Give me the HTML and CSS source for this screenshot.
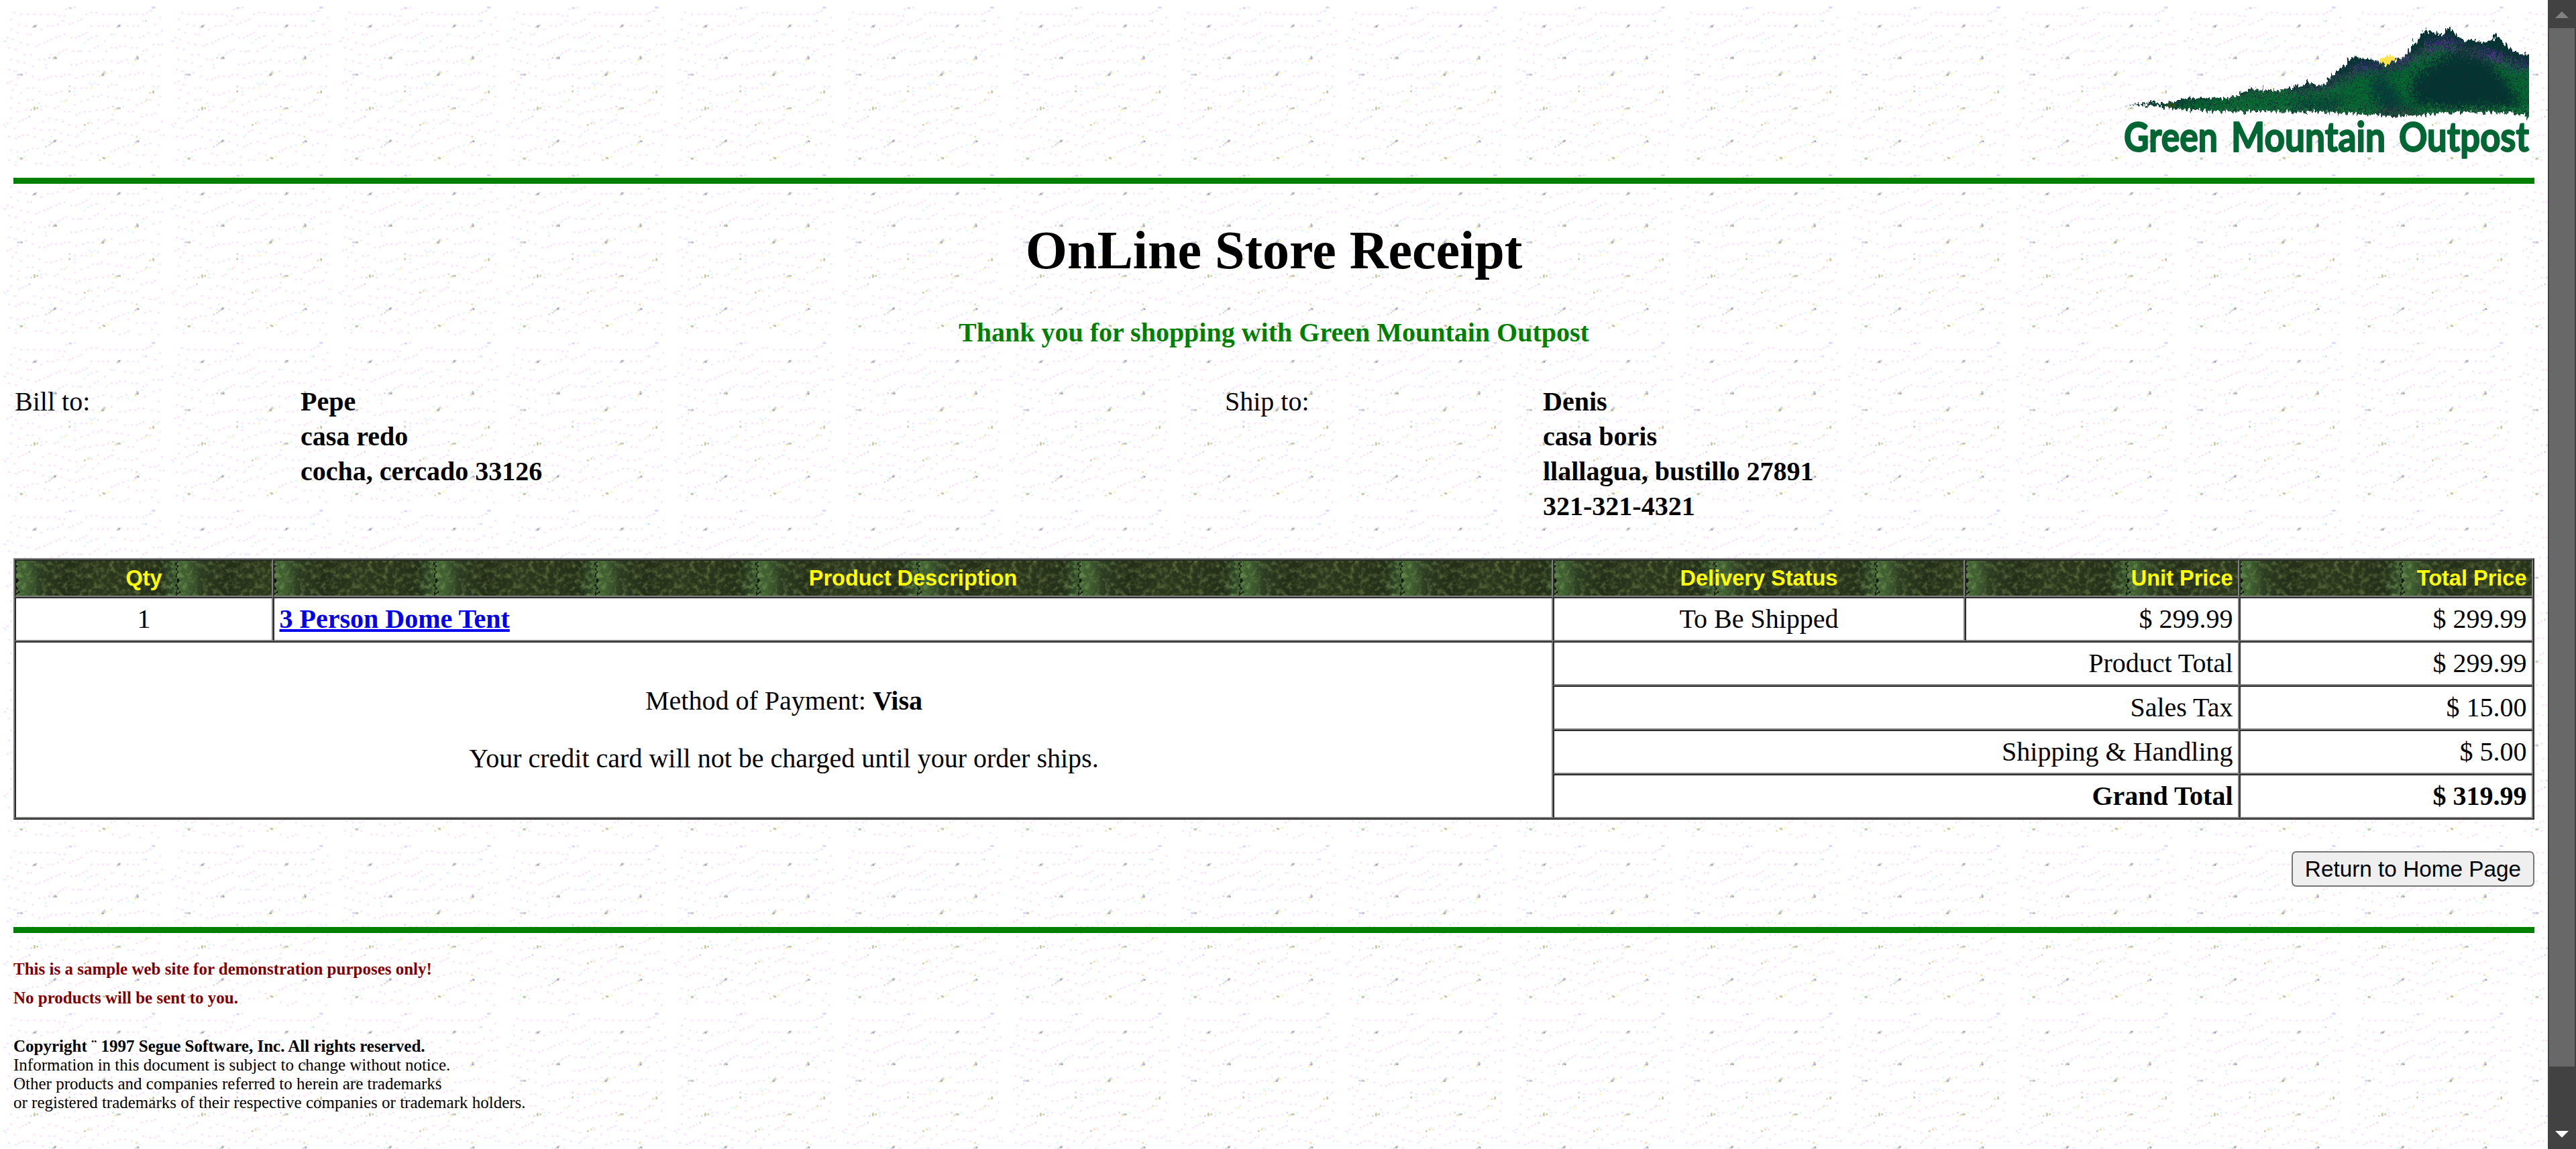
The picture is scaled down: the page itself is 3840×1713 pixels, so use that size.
FILE: index.html
```html
<!DOCTYPE html>
<html lang="en">
<head>
<meta charset="utf-8">
<title>OnLine Store Receipt</title>
<link rel="stylesheet" href="styles.css">
</head>
<body>
<main class="page">
  <header class="banner">
    <svg class="logo" width="610" height="215" viewBox="-2 0 610 215" role="img" aria-label="Green Mountain Outpost">
      <defs>
        <filter id="edge" filterUnits="userSpaceOnUse" x="-10" y="-10" width="640" height="170" color-interpolation-filters="sRGB">
          <feTurbulence type="fractalNoise" baseFrequency="0.3 0.12" numOctaves="2" seed="4" result="n"/>
          <feDisplacementMap in="SourceGraphic" in2="n" scale="15" xChannelSelector="R" yChannelSelector="G"/>
        </filter>
        <filter id="dither" filterUnits="userSpaceOnUse" x="0" y="0" width="1500" height="520" color-interpolation-filters="sRGB">
          <feGaussianBlur in="SourceGraphic" stdDeviation="9" result="b"/>
          <feTurbulence type="fractalNoise" baseFrequency="0.2" numOctaves="2" seed="9" result="n"/>
          <feDisplacementMap in="b" in2="n" scale="150" xChannelSelector="R" yChannelSelector="G" result="d"/>
          <feColorMatrix in="n" values="0 0 0 0 0.06 0 0 0 0 0.19 0 0 0 0 0.19 7 0 0 0 -3.7" result="specks"/>
          <feMerge><feMergeNode in="d"/><feMergeNode in="specks"/></feMerge>
        </filter>
        <clipPath id="frame"><rect x="0" y="0" width="605" height="142"/></clipPath>
        <clipPath id="ridge">
          <path d="M68 408L135 405L150 396L165 402L225 396L250 382L300 380L365 377L400 380L440 365L470 340L500 338L530 343L600 340L640 328L670 308L700 323L730 320L750 280L790 240L812 203L835 196L890 208L915 217L930 238L965 210L1000 192L1015 155L1035 125L1050 92L1070 76L1100 88L1125 98L1143 60L1163 90L1190 121L1230 126L1285 130L1302 90L1322 130L1350 162L1390 184L1440 184L1440 490L1411 474L1390 452L1350 442L1150 445L1020 456L960 463L900 452L700 440L500 438L350 436L280 430L210 422L140 412Z"/>
        </clipPath>
      </defs>
      <g clip-path="url(#frame)">
        <g filter="url(#edge)">
          <g transform="translate(-25 -20) scale(.4464 .3333)">
            <ellipse cx="938" cy="218" rx="30" ry="26" fill="#ffe24a"/>
            <g clip-path="url(#ridge)">
              <rect x="60" y="50" width="1400" height="440" fill="#033431"/>
              <g filter="url(#dither)">
                <rect x="20" y="20" width="1460" height="480" fill="#033431"/>
                <path d="M200 450L240 395L470 350L600 350L720 345L800 300L860 260L900 270L960 260L1030 200L1100 160L1170 165L1080 220L1020 290L1010 400L1130 425L1380 415L1330 300L1250 200L1480 260L1480 490L60 490Z" fill="#026a30"/>
                <path d="M880 290L930 280L950 340L1000 400L940 440L880 390Z" fill="#05403a"/>
                <path d="M620 400L790 385L760 430L620 430Z" fill="#05403a"/>
                <path d="M600 345L720 338L790 285L850 245L930 250L1020 200L1090 150L1180 160L1250 185L1310 210L1411 245" fill="none" stroke="#4b4d66" stroke-width="20"/>
                <path d="M350 445L700 445L900 460L1000 465L1150 450L1411 455" fill="none" stroke="#4d7a53" stroke-width="16"/>
                <path d="M900 442L1040 448" stroke="#352b43" stroke-width="24"/>
                <path d="M450 350L600 343M400 375L450 365" stroke="#3d7545" stroke-width="18"/>
                <path d="M820 240L915 240M965 212L1005 200M1060 140L1170 125M1240 170L1330 200M1350 235L1411 232" fill="none" stroke="#53279a" stroke-width="22"/>
              </g>
              <path d="M60 408L250 405" stroke="#12463f" stroke-width="12"/>
              <path d="M195 410L232 408" stroke="#2e4d17" stroke-width="12"/>
            </g>
          </g>
        </g>
      </g>
      <g class="wordmark">
        <text x="1" y="186" textLength="140" lengthAdjust="spacingAndGlyphs">Green</text>
        <text x="161" y="186" textLength="230" lengthAdjust="spacingAndGlyphs">Mountain</text>
        <text x="411" y="186" textLength="194" lengthAdjust="spacingAndGlyphs">Outpost</text>
      </g>
    </svg>
  </header>

  <hr class="rule">
  <h1 class="title">OnLine Store Receipt</h1>
  <p class="thanks">Thank you for shopping with Green Mountain Outpost</p>

  <section class="parties">
    <div>Bill to:</div>
    <address>Pepe<br>casa redo<br>cocha, cercado 33126</address>
    <div>Ship to:</div>
    <address>Denis<br>casa boris<br>llallagua, bustillo 27891<br>321-321-4321</address>
  </section>

  <table class="receipt">
    <colgroup><col class="c-qty"><col class="c-product"><col class="c-status"><col class="c-unit"><col class="c-total"></colgroup>
    <tr>
      <th>Qty</th><th>Product Description</th><th>Delivery Status</th><th class="num">Unit Price</th><th class="num">Total Price</th>
    </tr>
    <tr>
      <td class="mid">1</td><td><a href="#">3 Person Dome Tent</a></td><td class="mid">To Be Shipped</td><td class="num">$ 299.99</td><td class="num">$ 299.99</td>
    </tr>
    <tr>
      <td class="payment" colspan="2" rowspan="4"><p>Method of Payment: <b>Visa</b></p><p>Your credit card will not be charged until your order ships.</p></td>
      <td class="num" colspan="2">Product Total</td><td class="num">$ 299.99</td>
    </tr>
    <tr><td class="num" colspan="2">Sales Tax</td><td class="num">$ 15.00</td></tr>
    <tr><td class="num" colspan="2">Shipping &amp; Handling</td><td class="num">$ 5.00</td></tr>
    <tr><td class="num" colspan="2"><b>Grand Total</b></td><td class="num"><b>$ 319.99</b></td></tr>
  </table>

  <div class="actions"><button class="home" type="button">Return to Home Page</button></div>

  <hr class="rule">
  <footer>
    <p class="notice">This is a sample web site for demonstration purposes only!<br>No products will be sent to you.</p>
    <p class="legal"><b>Copyright ¨ 1997 Segue Software, Inc. All rights reserved.</b><br>Information in this document is subject to change without notice.<br>Other products and companies referred to herein are trademarks<br>or registered trademarks of their respective companies or trademark holders.</p>
  </footer>
</main>
<aside class="scrollbar" aria-hidden="true">
  <svg width="20" height="10" viewBox="0 0 20 10"><path d="M0 10L10 0L20 10Z" fill="#818181"/></svg>
  <div class="thumb"></div>
  <svg width="20" height="10" viewBox="0 0 20 10"><path d="M0 0H20L10 10Z" fill="#fff"/></svg>
</aside>
</body>
</html>
```
FILE: styles.css
```css
* { box-sizing: border-box; }

body {
  margin: 0;
  display: flex;
  height: 1713px;
  overflow: hidden;
  font: 40px/46px "Liberation Serif", "Times New Roman", serif;
  color: #000;
  background: #fff url("data:image/svg+xml,%3Csvg xmlns='http://www.w3.org/2000/svg' width='250' height='250' viewBox='0 0 750 750'%3E%3Cg fill='none' stroke-linecap='round' stroke-width='9'%3E%3Cpath stroke='%23fde0fd' d='M64 56h0M94 64h0M124 64h0M154 64h0M184 64h0M214 64h0M244 64h0M266 71h0M289 71h0M296 41h0M334 34h0M386 64h0M409 56h0M431 56h0M461 64h0M491 64h0M521 64h0M551 64h0M581 64h0M611 64h0M641 64h0M656 56h0M671 49h0M716 79h0M49 86h0M86 109h0M116 116h0M184 131h0M214 116h0M236 116h0M259 109h0M281 94h0M311 109h0M326 101h0M349 94h0M364 86h0M409 116h0M439 116h0M461 116h0M484 116h0M571 116h0M596 116h0M619 116h0M694 109h0M724 139h0M49 131h0M79 146h0M124 154h0M139 154h0M34 169h0M56 176h0M19 184h0M94 191h0M124 199h0M161 206h0M176 199h0M199 191h0M214 184h0M229 176h0M251 169h0M266 161h0M289 154h0M319 169h0M341 169h0M356 161h0M371 154h0M386 146h0M409 169h0M431 161h0M469 184h0M499 154h0M559 161h0M589 169h0M626 169h0M641 161h0M664 146h0M701 154h0M686 199h0M709 199h0M724 199h0M41 214h0M71 221h0M109 244h0M139 244h0M229 244h0M266 236h0M281 229h0M296 221h0M326 229h0M349 229h0M364 229h0M401 229h0M424 214h0M439 206h0M476 229h0M499 214h0M521 214h0M536 206h0M559 206h0M589 214h0M611 214h0M641 229h0M656 221h0M716 244h0M686 251h0M49 266h0M79 274h0M109 281h0M146 296h0M176 266h0M199 266h0M206 304h0M319 289h0M341 289h0M364 281h0M386 274h0M416 281h0M439 274h0M461 266h0M499 274h0M529 281h0M544 274h0M566 266h0M649 274h0M709 296h0M41 311h0M64 319h0M116 326h0M79 349h0M146 341h0M176 356h0M199 356h0M214 349h0M229 341h0M251 341h0M274 341h0M289 334h0M311 334h0M341 349h0M371 341h0M394 334h0M416 334h0M499 319h0M536 341h0M559 341h0M581 334h0M604 334h0M619 326h0M641 326h0M679 334h0M709 341h0M34 371h0M49 364h0M71 379h0M56 401h0M94 416h0M124 394h0M146 394h0M176 409h0M206 424h0M229 424h0M251 416h0M274 409h0M334 424h0M334 394h0M364 394h0M386 394h0M409 379h0M439 379h0M484 386h0M499 379h0M521 379h0M559 401h0M589 401h0M611 401h0M626 394h0M641 386h0M686 386h0M709 386h0M49 439h0M86 461h0M124 446h0M146 446h0M176 461h0M49 484h0M79 499h0M116 491h0M184 491h0M206 476h0M244 484h0M259 476h0M296 446h0M334 469h0M364 454h0M394 446h0M416 431h0M439 431h0M454 424h0M484 431h0M521 439h0M544 439h0M574 446h0M611 469h0M634 461h0M671 446h0M716 431h0M709 469h0M289 499h0M311 499h0M341 514h0M356 506h0M379 499h0M401 499h0M431 491h0M461 491h0M484 484h0M506 514h0M574 499h0M596 499h0M634 521h0M656 514h0M679 514h0M694 506h0M49 529h0M86 544h0M101 536h0M116 529h0M191 544h0M221 529h0M251 536h0M281 544h0M311 559h0M341 566h0M409 551h0M439 536h0M469 551h0M484 544h0M499 536h0M529 551h0M559 559h0M589 559h0M611 551h0M724 544h0M19 559h0M34 551h0M64 574h0M154 574h0M184 581h0M221 581h0M244 581h0M274 596h0M304 604h0M341 611h0M364 589h0M379 581h0M416 596h0M439 574h0M641 581h0M671 589h0M694 589h0M709 581h0M731 604h0M41 611h0M71 619h0M86 611h0M101 604h0M124 604h0M154 611h0M191 626h0M274 634h0M311 649h0M341 656h0M356 649h0M371 641h0M401 634h0M431 641h0M461 619h0M484 611h0M514 604h0M536 596h0M559 596h0M589 604h0M649 649h0M671 641h0M709 649h0M49 671h0M79 679h0M109 679h0M124 671h0M146 664h0M169 664h0M199 686h0M221 694h0M266 686h0M289 679h0M326 701h0M409 686h0M439 694h0M499 679h0M514 671h0M529 664h0M551 656h0M574 679h0M611 694h0M641 694h0M694 694h0M41 716h0M71 739h0M116 716h0M161 731h0M184 731h0M214 739h0M251 724h0M281 739h0M296 731h0M326 739h0M364 716h0M386 716h0M506 731h0M536 746h0M559 739h0M574 731h0M626 746h0M679 724h0M709 746h0'/%3E%3Cpath stroke='%23d8fafa' d='M26 184h0M394 176h0M379 191h0M641 94h0M509 154h0M356 229h0M259 244h0M206 289h0M574 281h0M596 289h0M634 244h0M401 371h0M424 371h0M439 319h0M71 319h0M334 409h0M184 476h0M274 454h0M551 476h0M506 536h0M401 544h0M26 566h0M349 604h0M229 611h0M221 634h0M626 619h0M574 649h0M716 604h0M79 701h0M109 701h0M71 724h0M701 394h0M679 49h0'/%3E%3Cpath stroke='%23dcd6fb' d='M311 36h6M682 34h9M652 94h0M147 121l16 -8M524 121l14 -8M239 262l10 -8M79 334h20M221 259h0M454 336l14 -14M606 265l12 -8M311 386h0M311 409h0M131 521h0M139 491h0M506 476h0M520 486h6M656 446h0M206 656h0M221 649h0M236 636l14 -8M605 638l12 -8M94 712h0M464 708h0M686 410h0'/%3E%3Cpath stroke='%23f9f9a8' d='M409 394h0M446 341h0M476 326h0M604 271h0M289 454h0M514 491h0M649 454h0M596 648h0M484 701h0'/%3E%3Cpath stroke='%23f7d8a8' d='M671 415h0M394 551h0M229 641h0M611 611h0M446 716h0'/%3E%3Cg stroke-width='9'%3E%3Cpath stroke='%23c9cba8' d='M154 117h3M530 117h3M242 259h8M95 334h3M461 333l4 -3M614 259v-6M311 408h0M686 408v6M154 481v8M167 484h0M529 484h7M379 559h0M246 628v3M92 709h7M462 706l6 2M616 631h0'/%3E%3Cpath stroke='%23aaa2b2' stroke-width='8' d='M250 261h0M156 119h0M532 114h0M616 262h0M460 336h0M245 632h0M619 633h0'/%3E%3C/g%3E%3C/g%3E%3C/svg%3E") 0 0 / 250px 250px;
}

p, h1, hr, address { margin: 0; }

.page { width: 3798px; padding: 20px 20px 0; }

.banner {
  display: flex;
  justify-content: flex-end;
  align-items: flex-start;
  height: 245px;
  padding: 20px 5px 0 0;
}
.logo { display: block; }
.wordmark {
  font: 700 62px "Lato", "Open Sans", sans-serif;
  fill: #006633;
  stroke: #006633;
  stroke-width: 2;
  stroke-linejoin: round;
}

.rule { height: 9px; border: 0; background: #008000; }

.title {
  margin-top: 53px;
  font-size: 80px;
  line-height: 92px;
  text-align: center;
}
.thanks {
  margin-top: 54px;
  font-weight: bold;
  text-align: center;
  color: #008000;
}

.parties {
  display: grid;
  grid-template-columns: 426px 1378px 474px 1fr;
  margin-top: 54px;
  padding-left: 2px;
  line-height: 52px;
}
.parties address { font-style: normal; font-weight: bold; }

.receipt {
  width: 3758px;
  margin-top: 51px;
  table-layout: fixed;
  border: 2px solid;
  border-color: #808080 #2c2c2c #2c2c2c #808080;
  border-spacing: 0;
}
.c-qty { width: 385px; }
.c-product { width: 1908px; }
.c-status { width: 614px; }
.c-unit { width: 409px; }
.c-total { width: 438px; }

.receipt th,
.receipt td {
  height: 66px;
  padding: 0 7.5px;
  border: 2px solid;
  border-color: #2c2c2c #808080 #808080 #2c2c2c;
  background-color: #fff;
}
.receipt th {
  height: 56px;
  font: bold 32.5px/37px "Liberation Sans", Arial, sans-serif;
  color: #ff0;
  background: #2b371c url("data:image/svg+xml,%3Csvg xmlns='http://www.w3.org/2000/svg' width='240' height='240'%3E%3Cdefs%3E%3ClinearGradient id='g'%3E%3Cstop offset='0' stop-color='%23406032'/%3E%3Cstop offset='.05' stop-color='%23406032'/%3E%3Cstop offset='.14' stop-color='%232a3b20'/%3E%3Cstop offset='.3' stop-color='%23222e17'/%3E%3Cstop offset='.5' stop-color='%232b381d'/%3E%3Cstop offset='.75' stop-color='%2328341a'/%3E%3Cstop offset='.88' stop-color='%23222e17'/%3E%3Cstop offset='.95' stop-color='%232e4425'/%3E%3Cstop offset='1' stop-color='%23406032'/%3E%3C/linearGradient%3E%3Cfilter id='n' x='0' y='0' width='1' height='1' color-interpolation-filters='sRGB'%3E%3CfeTurbulence type='fractalNoise' baseFrequency='.13' numOctaves='3' seed='8' stitchTiles='stitch' result='t'/%3E%3CfeDisplacementMap in='SourceGraphic' in2='t' scale='22' xChannelSelector='R' yChannelSelector='G' result='d'/%3E%3CfeColorMatrix in='t' values='.5 .2 0 0 -.31 .55 .25 0 0 -.36 .35 .1 0 0 -.2 0 0 0 0 1' result='c'/%3E%3CfeComposite in='d' in2='c' operator='arithmetic' k2='1' k3='.8'/%3E%3C/filter%3E%3C/defs%3E%3Crect x='-30' width='300' height='240' fill='%23406032'/%3E%3Crect width='240' height='240' fill='url(%23g)' filter='url(%23n)'/%3E%3C/svg%3E") 0 -12px / 240px 240px;
}
.receipt .mid { text-align: center; }
.receipt .num { text-align: right; }
.receipt a {
  font-weight: bold;
  color: #00e;
  text-decoration-thickness: 4px;
}
.receipt .payment { text-align: center; }
.payment p + p { margin-top: 40px; }

.actions { display: flex; justify-content: flex-end; margin: 47px 0 60px; }
.home {
  width: 362px;
  height: 53px;
  padding: 0;
  border: 2px solid #767676;
  border-radius: 7px;
  background: #efefef;
  font: 33.33px/38px "Liberation Sans", Arial, sans-serif;
  color: #000;
}

.notice {
  margin-top: 32px;
  font-size: 25px;
  font-weight: bold;
  line-height: 43px;
  color: #800000;
}
.legal { margin-top: 37px; font-size: 25px; line-height: 28px; }

.scrollbar {
  display: flex;
  flex-direction: column;
  align-items: center;
  width: 42px;
  padding: 17px 2px;
  background: #424242;
}
.thumb { width: 38px; height: 1548px; margin: 15px 0 96px; background: #686868; }
```
